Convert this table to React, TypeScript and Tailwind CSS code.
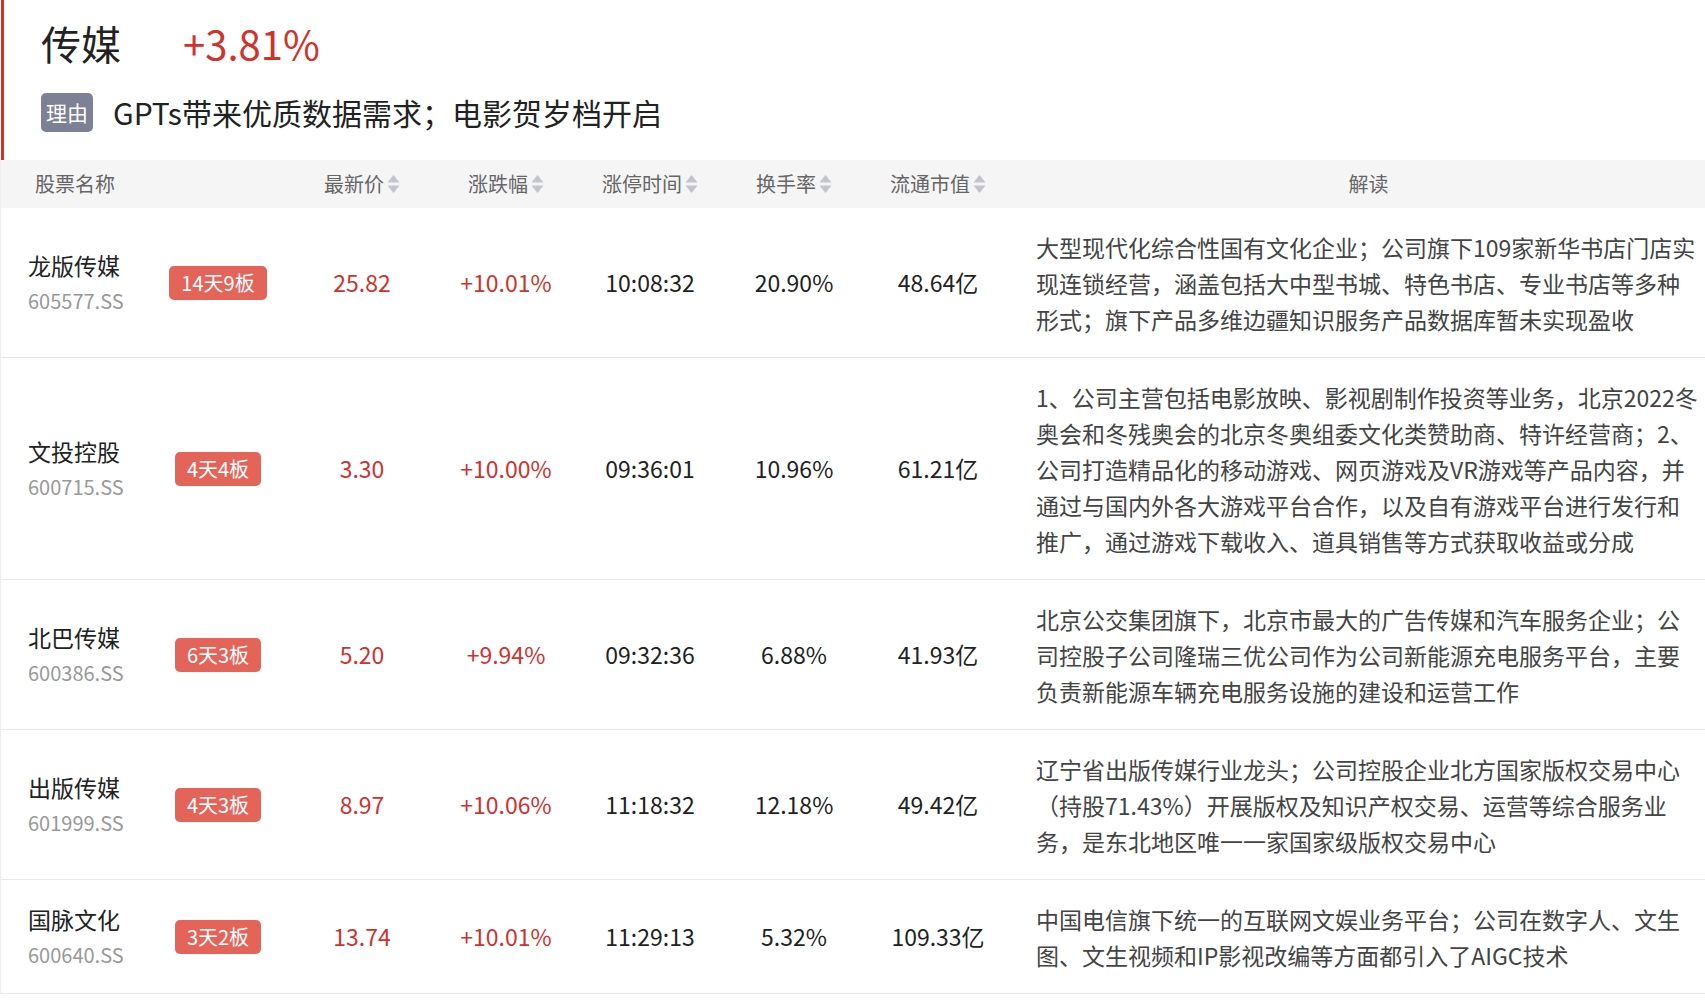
import React from 'react';

interface Stock {
  name: string;
  code: string;
  tag: string;
  price: string;
  change: string;
  time: string;
  turnover: string;
  cap: string;
  desc: string;
}

const stocks: Stock[] = [
  {
    name: '龙版传媒',
    code: '605577.SS',
    tag: '14天9板',
    price: '25.82',
    change: '+10.01%',
    time: '10:08:32',
    turnover: '20.90%',
    cap: '48.64亿',
    desc: '大型现代化综合性国有文化企业；公司旗下109家新华书店门店实现连锁经营，涵盖包括大中型书城、特色书店、专业书店等多种形式；旗下产品多维边疆知识服务产品数据库暂未实现盈收',
  },
  {
    name: '文投控股',
    code: '600715.SS',
    tag: '4天4板',
    price: '3.30',
    change: '+10.00%',
    time: '09:36:01',
    turnover: '10.96%',
    cap: '61.21亿',
    desc: '1、公司主营包括电影放映、影视剧制作投资等业务，北京2022冬奥会和冬残奥会的北京冬奥组委文化类赞助商、特许经营商；2、公司打造精品化的移动游戏、网页游戏及VR游戏等产品内容，并通过与国内外各大游戏平台合作，以及自有游戏平台进行发行和推广，通过游戏下载收入、道具销售等方式获取收益或分成',
  },
  {
    name: '北巴传媒',
    code: '600386.SS',
    tag: '6天3板',
    price: '5.20',
    change: '+9.94%',
    time: '09:32:36',
    turnover: '6.88%',
    cap: '41.93亿',
    desc: '北京公交集团旗下，北京市最大的广告传媒和汽车服务企业；公司控股子公司隆瑞三优公司作为公司新能源充电服务平台，主要负责新能源车辆充电服务设施的建设和运营工作',
  },
  {
    name: '出版传媒',
    code: '601999.SS',
    tag: '4天3板',
    price: '8.97',
    change: '+10.06%',
    time: '11:18:32',
    turnover: '12.18%',
    cap: '49.42亿',
    desc: '辽宁省出版传媒行业龙头；公司控股企业北方国家版权交易中心（持股71.43%）开展版权及知识产权交易、运营等综合服务业务，是东北地区唯一一家国家级版权交易中心',
  },
  {
    name: '国脉文化',
    code: '600640.SS',
    tag: '3天2板',
    price: '13.74',
    change: '+10.01%',
    time: '11:29:13',
    turnover: '5.32%',
    cap: '109.33亿',
    desc: '中国电信旗下统一的互联网文娱业务平台；公司在数字人、文生图、文生视频和IP影视改编等方面都引入了AIGC技术',
  },
];

const SortIcon = () => (
  <svg width="13" height="20" viewBox="0 0 13 20" className="ml-[3px]">
    <path d="M6.5 1 L12.5 8.5 L0.5 8.5 Z" fill="#c3c5cb" />
    <path d="M0.5 11.5 L12.5 11.5 L6.5 19 Z" fill="#c3c5cb" />
  </svg>
);

const cols = 'grid grid-cols-[145px_144px_144px_144px_144px_144px_144px_1fr]';

export default function App() {
  return (
    <div className="w-[1705px] min-h-[1008px] bg-white font-['Noto_Sans_CJK_SC','Noto_Sans',sans-serif]">
      {/* Sector header */}
      <section className="ml-[1px] h-[160px] border-l-[3px] border-[#d0322d] pl-[37px] pt-[19px]">
        <div className="flex items-center h-[48px] text-[40px] leading-[48px]">
          <span className="text-[#222]">传媒</span>
          <span className="ml-[62px] text-[#d0322d]">+3.81%</span>
        </div>
        <div className="mt-[26px] flex items-center">
          <span className="h-[39px] rounded-[5px] bg-[#7d8196] px-[5px] text-[21px] leading-[39px] text-white">理由</span>
          <span className="ml-[20px] text-[30px] leading-[39px] text-[#222]">GPTs带来优质数据需求；电影贺岁档开启</span>
        </div>
      </section>

      {/* Table */}
      <div className="border-l border-[#eeeeee]">
        <div className={`${cols} h-[48px] items-center bg-[#f5f5f5] text-[20px] text-[#666]`}>
          <div className="col-span-2 pl-[34px]">股票名称</div>
          {['最新价', '涨跌幅', '涨停时间', '换手率', '流通市值'].map((h) => (
            <div key={h} className="flex items-center justify-center">
              {h}
              <SortIcon />
            </div>
          ))}
          <div className="pl-[26px] pr-[4px] text-center">解读</div>
        </div>

        {stocks.map((s) => (
          <div key={s.code} className={`${cols} items-center border-b border-[#e8e8e8] text-[23px]`}>
            <div className="pl-[27px]">
              <div className="leading-[36px] text-[#222]">{s.name}</div>
              <div className="text-[20px] leading-[36px] text-[#999]">{s.code}</div>
            </div>
            <div className="flex justify-center">
              <span className="h-[34px] rounded-[5px] bg-[#e5645a] px-[12px] text-[20px] leading-[34px] text-white">{s.tag}</span>
            </div>
            <div className="text-center text-[#d0322d]">{s.price}</div>
            <div className="text-center text-[#d0322d]">{s.change}</div>
            <div className="text-center text-[#222]">{s.time}</div>
            <div className="text-center text-[#222]">{s.turnover}</div>
            <div className="text-center text-[#222]">{s.cap}</div>
            <div className="pt-[21px] pb-[20px] pl-[26px] pr-[4px] leading-[36px] text-[#444]">{s.desc}</div>
          </div>
        ))}
      </div>
    </div>
  );
}
